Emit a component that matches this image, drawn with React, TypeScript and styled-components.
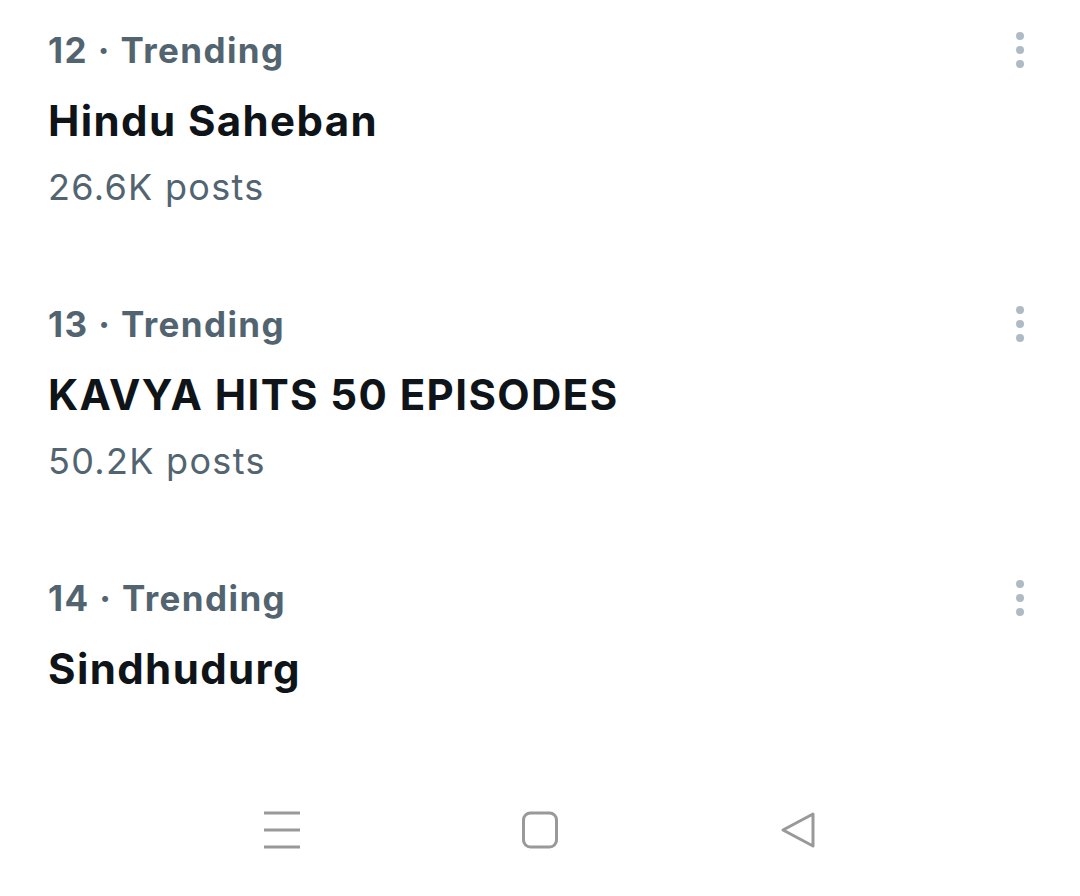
import React, { FC } from "react";
import styled, { createGlobalStyle } from "styled-components";

const GlobalStyle = createGlobalStyle`
  html, body {
    margin: 0;
    padding: 0;
    background: #ffffff;
  }
  body {
    font-family: Inter, "Noto Sans", "Liberation Sans", sans-serif;
  }
`;

interface Trend {
  rank: number;
  title: string;
  posts?: string;
}

const trends: Trend[] = [
  { rank: 12, title: "Hindu Saheban", posts: "26.6K posts" },
  { rank: 13, title: "KAVYA HITS 50 EPISODES", posts: "50.2K posts" },
  { rank: 14, title: "Sindhudurg" }
];

const Screen = styled.div`
  display: flex;
  flex-direction: column;
  width: 1080px;
  height: 896px;
  overflow: hidden;
  background: #ffffff;
`;

const TrendList = styled.ul`
  flex: 1;
  min-height: 0;
  overflow: hidden;
  margin: 0;
  padding: 0;
  list-style: none;
`;

const TrendItem = styled.li`
  height: 274px;
  box-sizing: border-box;
  padding: 26px 40px 0 48px;
`;

const MetaRow = styled.div`
  display: flex;
  align-items: center;
  justify-content: space-between;
  height: 48px;
`;

const Meta = styled.span`
  font-size: 35px;
  font-weight: 700;
  color: #536471;
  letter-spacing: 1.4px;
`;

const Title = styled.div`
  margin-top: 19px;
  font-size: 42px;
  line-height: 56px;
  font-weight: 700;
  color: #0f1419;
  letter-spacing: 1.4px;
`;

const Posts = styled.div`
  margin-top: 14px;
  font-size: 36px;
  line-height: 48px;
  font-weight: 400;
  color: #536471;
  letter-spacing: 1.3px;
`;

const MoreButton = styled.button`
  display: flex;
  align-items: center;
  justify-content: center;
  width: 40px;
  height: 48px;
  padding: 0;
  border: none;
  background: none;
  color: #aebac4;
`;

const NavBar = styled.nav`
  display: flex;
  flex-shrink: 0;
  align-items: center;
  justify-content: center;
  gap: 222px;
  height: 132px;
  color: #999999;
`;

const NavIcon = styled.svg`
  width: 36px;
  height: 40px;
  display: block;
`;

const MoreIcon: FC = () => (
  <svg width="10" height="38" viewBox="0 0 10 38" fill="currentColor">
    <circle cx="5" cy="5" r="4" />
    <circle cx="5" cy="19" r="4" />
    <circle cx="5" cy="33" r="4" />
  </svg>
);

const TrendRow: FC<{ trend: Trend }> = ({ trend }) => (
  <TrendItem>
    <MetaRow>
      <Meta>{trend.rank} · Trending</Meta>
      <MoreButton aria-label="More">
        <MoreIcon />
      </MoreButton>
    </MetaRow>
    <Title>{trend.title}</Title>
    {trend.posts && <Posts>{trend.posts}</Posts>}
  </TrendItem>
);

export default function App() {
  return (
    <>
      <GlobalStyle />
      <Screen>
        <TrendList>
          {trends.map((t) => (
            <TrendRow key={t.rank} trend={t} />
          ))}
        </TrendList>
        <NavBar>
          <NavIcon viewBox="0 0 36 40" fill="none" stroke="currentColor" strokeWidth="3">
            <line x1="0" y1="3" x2="36" y2="3" />
            <line x1="0" y1="20" x2="36" y2="20" />
            <line x1="0" y1="37" x2="36" y2="37" />
          </NavIcon>
          <NavIcon viewBox="0 0 36 40" fill="none" stroke="currentColor" strokeWidth="3">
            <rect x="1.5" y="3" width="33" height="34" rx="7" />
          </NavIcon>
          <NavIcon viewBox="0 0 36 40" fill="none" stroke="currentColor" strokeWidth="3" strokeLinejoin="round">
            <path d="M33 4 L3 20 L33 36 Z" />
          </NavIcon>
        </NavBar>
      </Screen>
    </>
  );
}
